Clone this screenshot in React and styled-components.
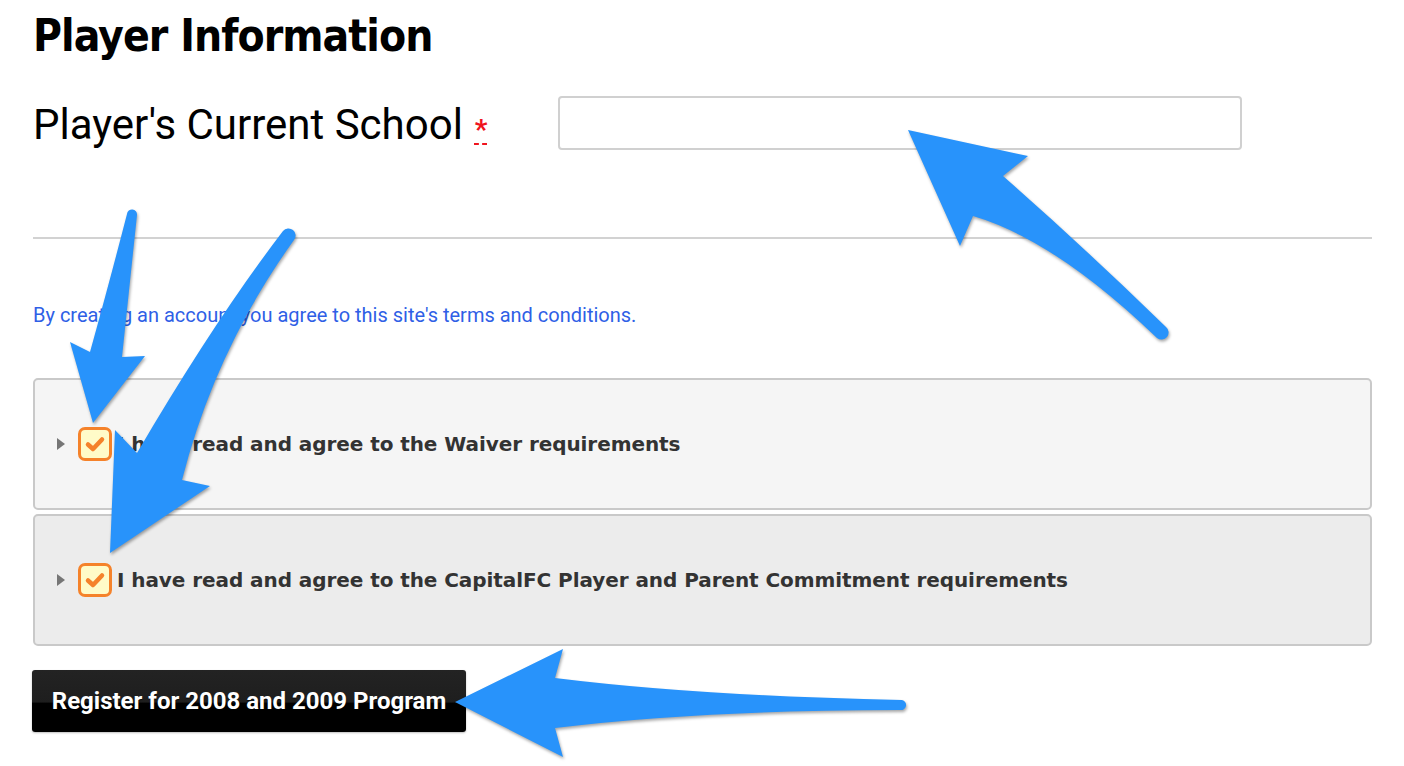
import React from "react";
import styled, { createGlobalStyle } from "styled-components";

const GlobalStyle = createGlobalStyle`
  html, body { margin: 0; padding: 0; background: #ffffff; }
  * { box-sizing: border-box; }
`;

const Page = styled.div`
  position: relative;
  width: 1404px;
  height: 766px;
  overflow: hidden;
  padding: 0 32px 0 33px;
  display: flex;
  flex-direction: column;
  font-family: Roboto, "Liberation Sans", sans-serif;
`;

const Heading = styled.h1`
  margin: 10px 0 0;
  font-family: "DejaVu Sans Condensed", "DejaVu Sans", sans-serif;
  font-stretch: condensed;
  font-weight: 700;
  font-size: 44px;
  line-height: 52px;
  letter-spacing: -0.95px;
  color: #000;
`;

const FieldRow = styled.div`
  margin-top: 34px;
  display: grid;
  grid-template-columns: 525px 684px;
  align-items: center;
  height: 54px;
`;

const Label = styled.label`
  font-family: Roboto, "Liberation Sans", sans-serif;
  font-size: 42px;
  font-weight: 400;
  color: #000;
  display: flex;
  align-items: baseline;
  white-space: nowrap;
  padding-top: 3px;
`;

const Required = styled.abbr`
  margin-left: 12px;
  color: #f0141e;
  font-size: 28px;
  font-weight: 700;
  text-decoration: underline dashed #f0141e;
  text-decoration-thickness: 2px;
  text-underline-offset: 4px;
  cursor: help;
`;

const TextInput = styled.input`
  width: 684px;
  height: 54px;
  border: 2px solid #d0d0d0;
  border-radius: 4px;
  background: #fff;
  font-size: 20px;
  padding: 0 12px;
  outline: none;
`;

const Divider = styled.hr`
  margin: 87px 0 0;
  border: none;
  height: 2px;
  background: #d2d2d2;
`;

const TermsLink = styled.a`
  margin-top: 63px;
  font-family: Roboto, "Liberation Sans", sans-serif;
  font-size: 20px;
  line-height: 26px;
  color: #2f5fe6;
  text-decoration: none;
`;

const Panels = styled.div`
  margin-top: 50px;
  display: flex;
  flex-direction: column;
  gap: 4px;
`;

const Panel = styled.div`
  height: 132px;
  border: 2px solid #c9c9c9;
  border-radius: 5px;
  background: ${(p) => (p.$tone === "dark" ? "#ececec" : "#f5f5f5")};
  display: flex;
  align-items: center;
  padding-left: 22px;
`;

const Caret = styled.span`
  width: 0;
  height: 0;
  border-top: 6px solid transparent;
  border-bottom: 6px solid transparent;
  border-left: 8px solid #767676;
  margin-right: 13px;
`;

const CheckBox = styled.span`
  width: 34px;
  height: 34px;
  border: 3.5px solid #f5822a;
  border-radius: 7px;
  background: #fffbc8;
  display: flex;
  align-items: center;
  justify-content: center;
  margin-right: 5px;
  flex-shrink: 0;
`;

const PanelText = styled.span`
  font-family: "DejaVu Sans", sans-serif;
  font-weight: 700;
  font-size: 20px;
  letter-spacing: -0.07px;
  color: #333;
  white-space: nowrap;
`;

const SubmitButton = styled.button`
  margin-top: 24px;
  margin-left: -1px;
  align-self: flex-start;
  width: 434px;
  height: 62px;
  border: none;
  border-radius: 3px;
  background: linear-gradient(to bottom, #232323 0%, #1e1e1e 52%, #000 53%, #000 100%);
  color: #fff;
  font-family: Roboto, "Liberation Sans", sans-serif;
  font-weight: 700;
  font-size: 24px;
  letter-spacing: 0;
  text-shadow: 0 1px 1px rgba(0, 0, 0, 0.8);
  box-shadow: 0 1px 2px rgba(0, 0, 0, 0.25);
  cursor: pointer;
`;

const Annotations = styled.svg`
  position: absolute;
  left: 0;
  top: 0;
  width: 1404px;
  height: 766px;
  pointer-events: none;
  filter: drop-shadow(1px 2px 1.5px rgba(0, 0, 0, 0.35));
`;

const Check = () => (
  <svg width="22" height="22" viewBox="0 0 22 22">
    <path
      d="M4 11.5 L9 16 L18 6.5"
      fill="none"
      stroke="#f5822a"
      strokeWidth="4.5"
      strokeLinecap="round"
      strokeLinejoin="round"
    />
  </svg>
);

const ARROW = "#2893fb";

const arrows = [
  // top-right arrow pointing at the text input
  "M908 130 L1028 156 L1003 176 Q1085 248 1166 327 A6 6 0 0 1 1157 338 Q1055 240 973 216 L960 246 Z",
  // left arrow pointing at first checkbox
  "M127 214 A5 5 0 0 1 137 215 L122 357 L145 356 L93 423 L70 342 L90 352 Q110 280 127 214 Z",
  // diagonal arrow pointing at second checkbox
  "M283 231 A6 6 0 0 1 294 240 Q215 350 182 480 L210 486 L110 553 L115 430 L137 453 Q215 320 283 231 Z",
  // bottom arrow pointing at the submit button
  "M455 702 L563 649 L555 678 Q700 696 902 700 A5 5 0 0 1 900 710 Q700 710 555 728 L563 757 Z",
];

export default function App() {
  return (
    <>
      <GlobalStyle />
      <Page>
        <Heading>Player Information</Heading>
        <FieldRow>
          <Label htmlFor="school">
            Player's Current School
            <Required title="required">*</Required>
          </Label>
          <TextInput id="school" type="text" />
        </FieldRow>
        <Divider />
        <TermsLink href="#">
          By creating an account you agree to this site's terms and conditions.
        </TermsLink>
        <Panels>
          <Panel $tone="light">
            <Caret />
            <CheckBox>
              <Check />
            </CheckBox>
            <PanelText>I have read and agree to the Waiver requirements</PanelText>
          </Panel>
          <Panel $tone="dark">
            <Caret />
            <CheckBox>
              <Check />
            </CheckBox>
            <PanelText>
              I have read and agree to the CapitalFC Player and Parent Commitment requirements
            </PanelText>
          </Panel>
        </Panels>
        <SubmitButton type="button">Register for 2008 and 2009 Program</SubmitButton>
        <Annotations viewBox="0 0 1404 766">
          {arrows.map((d, i) => (
            <path key={i} d={d} fill={ARROW} />
          ))}
        </Annotations>
      </Page>
    </>
  );
}
